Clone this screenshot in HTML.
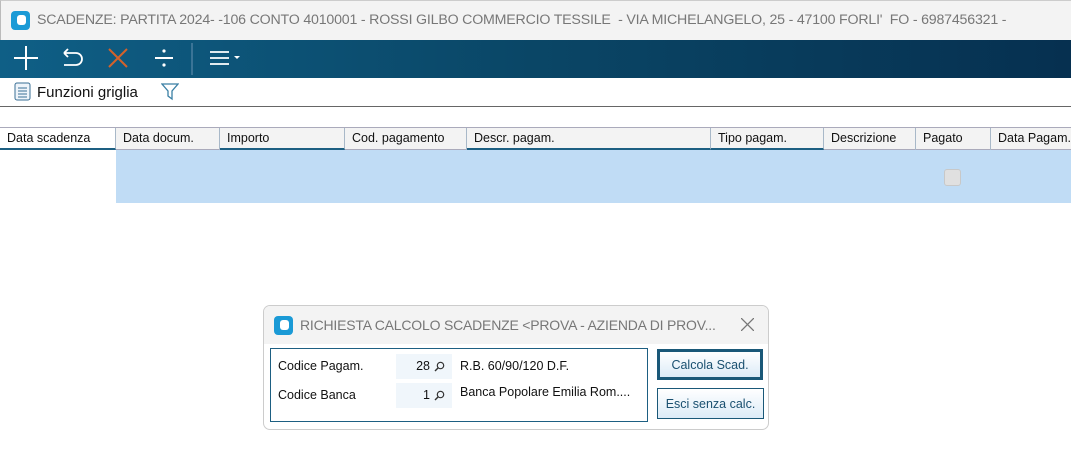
<!DOCTYPE html><html><head><style>
*{margin:0;padding:0;box-sizing:border-box}
body{width:1071px;height:453px;background:#fff;font-family:"Liberation Sans",sans-serif;position:relative;overflow:hidden}
.a{position:absolute}
.title{left:0;top:0;width:1071px;height:40px;background:#f3f3f3;border-top:1px solid #ccc;border-left:1px solid #bbb}
.title span{position:absolute;left:36px;top:11px;font-size:14.2px;color:#777;white-space:nowrap;letter-spacing:-0.2px}
.logo{width:19px;height:19px;background:#1a9ad6;border-radius:4px}
.logo:after{content:"";position:absolute;left:6px;top:4px;width:9px;height:10px;background:#fff;border-radius:3px}
.tb{left:0;top:40px;width:1071px;height:38px;background:linear-gradient(90deg,#0f5f86,#0a4666 50%,#063050)}
.hd{top:127px;height:23px;background:#f3f3f3;border-top:1px solid #aab;border-bottom:1px solid #aab;font-size:12.5px;color:#111}
.hd div{position:absolute;top:0;height:22px;padding:3px 0 0 7px;border-right:1px solid #a8b8c8}
.u{border-bottom:2px solid #1d5f82}
.dlg{left:263px;top:305px;width:506px;height:125px;background:#fff;border:1px solid #ccc;border-radius:7px;overflow:hidden}
.btn{position:absolute;background:linear-gradient(#fff,#dcebf7);border:1px solid #1a5878;color:#1a5070;font-size:12.5px;text-align:center}
.f{font-size:12.5px;color:#111;position:absolute}
</style></head><body>
<div class="a title"><div class="a logo" style="left:10px;top:10px"></div><span>SCADENZE: PARTITA 2024- -106 CONTO 4010001 - ROSSI GILBO COMMERCIO TESSILE &nbsp;- VIA MICHELANGELO, 25 - 47100 FORLI' &nbsp;FO - 6987456321 -</span></div>
<div class="a tb">
<svg width="260" height="38" style="position:absolute;left:0;top:0">
<g stroke="#fff" stroke-width="2" fill="none">
<path d="M14 18H38M26 6V30"/>
<path d="M64 13H76a6 6 0 0 1 0 12H64M64 13l4-4M64 13l4 4" stroke-width="1.8"/>
</g>
<path d="M109 9L127 27M127 9L109 27" stroke="#d4622a" stroke-width="2"/>
<path d="M155 18H173" stroke="#fff" stroke-width="2"/><circle cx="164" cy="11" r="1.6" fill="#fff"/><circle cx="164" cy="25" r="1.6" fill="#fff"/>
<path d="M192 3V35" stroke="#4a7f9f" stroke-width="1.5"/>
<path d="M210 12H229M210 18H229M210 24H229" stroke="#fff" stroke-width="1.8"/>
<path d="M234 16h6l-3 3z" fill="#fff"/>
</svg></div>
<svg class="a" style="left:14px;top:82px" width="18" height="20"><rect x="1" y="1" width="15" height="17" rx="2" fill="#eef4fa" stroke="#3a6f95"/><path d="M4 6h9M4 9h9M4 12h9M4 15h9" stroke="#3a6f95"/></svg>
<div class="a f" style="left:37px;top:84px;font-size:15px">Funzioni griglia</div>
<svg class="a" style="left:161px;top:82px" width="18" height="20"><path d="M1 2h16l-6 7v8l-4-3v-5z" fill="none" stroke="#3a7fa5" stroke-width="1.3"/></svg>
<div class="a" style="left:0;top:106px;width:1071px;height:1px;background:#666"></div>
<div class="a hd" style="left:0;width:1071px">
<div class="u" style="left:0;width:116px;background:#fff">Data scadenza</div>
<div style="left:116px;width:104px">Data docum.</div>
<div class="u" style="left:220px;width:125px">Importo</div>
<div style="left:345px;width:122px">Cod. pagamento</div>
<div class="u" style="left:467px;width:244px">Descr. pagam.</div>
<div class="u" style="left:711px;width:113px">Tipo pagam.</div>
<div style="left:824px;width:92px">Descrizione</div>
<div style="left:916px;width:75px">Pagato</div>
<div style="left:991px;width:90px">Data Pagam.</div>
</div>
<div class="a" style="left:116px;top:150px;width:955px;height:53px;background:#c0dcf5"></div>
<div class="a" style="left:944px;top:169px;width:17px;height:17px;background:#e0e0e0;border:1px solid #c8c8c8;border-radius:3px"></div>
<div class="a dlg">
<div class="a" style="left:0;top:0;width:506px;height:38px;background:#f3f3f3"></div>
<div class="a logo" style="left:10px;top:10px"></div>
<div class="a" style="left:36px;top:11px;font-size:14px;color:#777;white-space:nowrap;letter-spacing:-0.2px">RICHIESTA CALCOLO SCADENZE &lt;PROVA - AZIENDA DI PROV...</div>
<svg class="a" style="left:477px;top:12px" width="13" height="13"><path d="M0 0L13 13M13 0L0 13" stroke="#777" stroke-width="1.3"/></svg>
<div class="a" style="left:6px;top:42px;width:378px;height:74px;border:1.5px solid #1d5f82"></div>
<div class="f" style="left:14px;top:53px">Codice Pagam.</div>
<div class="f" style="left:14px;top:82px">Codice Banca</div>
<div class="a" style="left:132px;top:48px;width:56px;height:25px;background:#f0f6fb"></div>
<div class="a" style="left:132px;top:77px;width:56px;height:25px;background:#f0f6fb"></div>
<div class="f" style="left:150px;top:53px;width:16px;text-align:right">28</div>
<div class="f" style="left:150px;top:82px;width:16px;text-align:right">1</div>
<svg class="a" style="left:170px;top:55px" width="11" height="11"><circle cx="6.5" cy="4.5" r="3.2" fill="none" stroke="#333" stroke-width="1.2"/><path d="M4 7L1 10" stroke="#333" stroke-width="1.4"/></svg>
<svg class="a" style="left:170px;top:84px" width="11" height="11"><circle cx="6.5" cy="4.5" r="3.2" fill="none" stroke="#333" stroke-width="1.2"/><path d="M4 7L1 10" stroke="#333" stroke-width="1.4"/></svg>
<div class="f" style="left:196px;top:53px">R.B. 60/90/120 D.F.</div>
<div class="f" style="left:196px;top:79px">Banca Popolare Emilia Rom....</div>
<div class="btn" style="left:393px;top:43px;width:106px;height:31px;border:3px solid #1a5878;padding-top:6px">Calcola Scad.</div>
<div class="btn" style="left:393px;top:82px;width:107px;height:31px;padding-top:8px">Esci senza calc.</div>
</div>
</body></html>
